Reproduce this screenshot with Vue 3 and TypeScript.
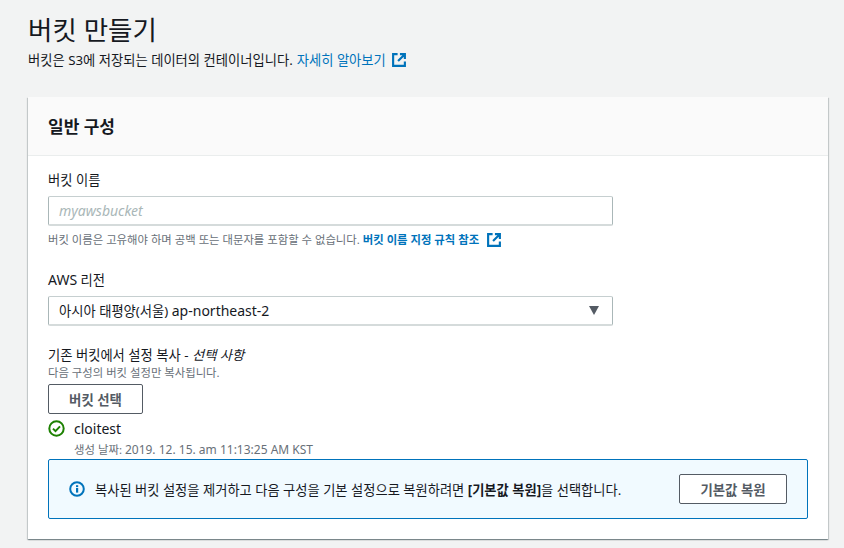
<script setup lang="ts">
const title = '버킷 만들기'
</script>

<template>
  <div class="page">
    <header class="head">
      <h1>{{ title }}</h1>
      <p class="desc">
        <span>버킷은 S3에 저장되는 데이터의 컨테이너입니다.</span>
        <a class="link">자세히 알아보기</a>
        <svg class="ext" width="14" height="14" viewBox="0 0 15 15"><path d="M6 1.2H1.2v12.6h12.6V9M8.5 1.2h5.3v5.3M13.5 1.5L6.5 8.5" fill="none" stroke="#0073bb" stroke-width="2.3"/></svg>
      </p>
    </header>
    <section class="card">
      <div class="card-head"><h2>일반 구성</h2></div>
      <div class="card-body">
        <label class="label">버킷 이름</label>
        <div class="input placeholder">myawsbucket</div>
        <p class="hint">
          <span>버킷 이름은 고유해야 하며 공백 또는 대문자를 포함할 수 없습니다.</span>
          <a class="link strong">버킷 이름 지정 규칙 참조</a>
          <svg class="ext" width="14" height="14" viewBox="0 0 15 15"><path d="M6 1.2H1.2v12.6h12.6V9M8.5 1.2h5.3v5.3M13.5 1.5L6.5 8.5" fill="none" stroke="#0073bb" stroke-width="2.3"/></svg>
        </p>
        <label class="label region-label"><span class="lat">AWS</span> 리전</label>
        <div class="input select">
          <span>아시아 태평양(서울) <span class="lat">ap-northeast-2</span></span>
          <i class="caret"></i>
        </div>
        <label class="label copy-label">기존 버킷에서 설정 복사 - <em>선택 사항</em></label>
        <p class="sub">다음 구성의 버킷 설정만 복사됩니다.</p>
        <button class="btn pick">버킷 선택</button>
        <div class="status">
          <svg width="17" height="17" viewBox="0 0 17 17"><circle cx="8.5" cy="8.5" r="7.2" fill="none" stroke="#1d8102" stroke-width="2"/><path d="M5 8.6l2.5 2.5L12 6.4" fill="none" stroke="#1d8102" stroke-width="2"/></svg>
          <span class="name">cloitest</span>
        </div>
        <p class="date">생성 날짜: <span class="lat-date">2019. 12. 15. am 11:13:25 AM KST</span></p>
        <div class="alert">
          <svg width="16" height="16" viewBox="0 0 16 16"><circle cx="8" cy="8" r="6.8" fill="none" stroke="#0073bb" stroke-width="2"/><rect x="7" y="7" width="2.2" height="4.6" fill="#0073bb"/><rect x="7" y="4.2" width="2.2" height="1.9" fill="#0073bb"/></svg>
          <p>복사된 버킷 설정을 제거하고 다음 구성을 기본 설정으로 복원하려면 <b>[기본값 복원]</b>을 선택합니다.</p>
          <button class="btn reset">기본값 복원</button>
        </div>
      </div>
    </section>
  </div>
</template>

<style>
html, body { margin: 0; background: #f2f3f3; }
</style>

<style scoped>
.page {
  width: 844px;
  height: 548px;
  overflow: hidden;
  box-sizing: border-box;
  padding: 13px 16px 0 28px;
  background: #f2f3f3;
  color: #16191f;
  font-family: "Noto Sans", "Noto Sans CJK KR", sans-serif;
  font-size: 13.3px;
}
h1 { margin: 0; font-size: 26.5px; line-height: 34px; font-weight: 400; }
.desc { margin: 3px 0 0; font-size: 13.3px; line-height: 20px; display: flex; align-items: center; gap: 4px; }
.lat { font-size: 14px; }
.lat-date { font-size: 12px; }
.link { color: #0073bb; }
.strong { font-weight: 700; }
.ext { margin-left: 2px; flex: none; }
.card {
  margin-top: 27px;
  background: #fff;
  box-shadow: 0 1px 1px 0 rgba(0, 28, 36, .3), 1px 1px 1px 0 rgba(0, 28, 36, .15), -1px 1px 1px 0 rgba(0, 28, 36, .15);
}
.card-head {
  height: 59px;
  box-sizing: border-box;
  padding: 0 20px 2px;
  display: flex;
  align-items: center;
  background: #fafafa;
  border-bottom: 1px solid #eaeded;
}
h2 { margin: 0; font-size: 17px; font-weight: 700; }
.card-body { padding: 14px 20px 20px; }
.label { display: block; font-size: 13.3px; line-height: 20px; }
.input {
  width: 565px;
  height: 30px;
  margin-top: 6px;
  box-sizing: border-box;
  padding: 0 10px;
  display: flex;
  align-items: center;
  justify-content: space-between;
  background: #fff;
  border: 1px solid #aab7b8;
  border-top-color: #c6cfd0;
  border-bottom: 2px solid #d5dbdb;
  border-radius: 2px;
  font-size: 13.3px;
}
.select { padding-right: 13px; }
.placeholder { color: #aab7b8; font-style: italic; font-size: 14px; }
.hint { margin: 4px 0 0; font-size: 11.36px; line-height: 20px; color: #687078; display: flex; align-items: center; gap: 3px; }
.hint .ext { margin-left: 5px; }
.region-label { margin-top: 20px; }
.caret { width: 0; height: 0; border-left: 5px solid transparent; border-right: 5px solid transparent; border-top: 9px solid #545b64; }
.copy-label { margin-top: 19px; }
.sub { margin: 0; font-size: 11.36px; line-height: 15px; color: #687078; }
.btn {
  box-sizing: border-box;
  height: 30px;
  background: #fff;
  border: 1px solid #545b64;
  border-radius: 2px;
  color: #545b64;
  font: 700 13.4px "Noto Sans", "Noto Sans CJK KR", sans-serif;
  padding: 0;
}
.pick { width: 95px; display: block; margin-top: 4px; }
.status { display: flex; align-items: center; gap: 9px; margin-top: 4px; height: 20px; }
.name { font-size: 14px; }
.date { margin: 3px 0 0 26px; font-size: 11.4px; line-height: 18px; color: #687078; }
.alert {
  width: 760px;
  height: 60px;
  box-sizing: border-box;
  margin-top: 0;
  padding: 0 20px;
  display: flex;
  align-items: center;
  gap: 10px;
  background: #f1faff;
  border: 1px solid #0073bb;
  border-radius: 2px;
}
.alert p { margin: 0; flex: 1; font-size: 13.28px; }
.reset { width: 108px; }
</style>
